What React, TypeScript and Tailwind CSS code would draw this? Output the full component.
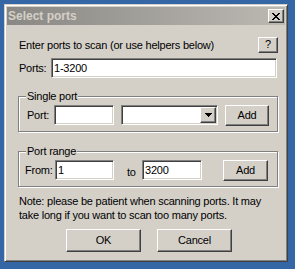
import React from "react";

const sunken =
  "border border-t-[#808080] border-l-[#808080] border-b-white border-r-white shadow-[inset_1px_1px_0_#404040,inset_-1px_-1px_0_#d4d0c8] bg-white";
const raised =
  "border border-t-white border-l-white border-b-[#404040] border-r-[#404040] shadow-[inset_-1px_-1px_0_#808080] bg-[#d4d0c8]";
const group =
  "relative border border-[#808080] shadow-[inset_1px_1px_0_#ffffff,1px_1px_0_#ffffff]";

function CloseGlyph() {
  const px: [number, number, number][] = [
    [0, 0, 2], [6, 0, 2],
    [1, 1, 2], [5, 1, 2],
    [2, 2, 4],
    [3, 3, 2],
    [2, 4, 4],
    [1, 5, 2], [5, 5, 2],
    [0, 6, 2], [6, 6, 2],
  ];
  return (
    <svg width="8" height="7" viewBox="0 0 8 7" shapeRendering="crispEdges">
      {px.map(([x, y, w], i) => (
        <rect key={i} x={x} y={y} width={w} height={1} fill="#000" />
      ))}
    </svg>
  );
}

function ArrowGlyph() {
  return (
    <svg width="7" height="4" viewBox="0 0 7 4" shapeRendering="crispEdges">
      <rect x="0" y="0" width="7" height="1" fill="#000" />
      <rect x="1" y="1" width="5" height="1" fill="#000" />
      <rect x="2" y="2" width="3" height="1" fill="#000" />
      <rect x="3" y="3" width="1" height="1" fill="#000" />
    </svg>
  );
}

export default function App() {
  return (
    <div className="w-[295px] h-[269px] bg-[#3567a6] pt-[4px] pl-[4px] font-['Liberation_Sans',Arial,sans-serif] text-[11px] tracking-[-0.22px] text-black">
      <div className="w-[284px] h-[258px] bg-[#d4d0c8] border border-t-[#d4d0c8] border-l-[#d4d0c8] border-b-[#404040] border-r-[#404040] shadow-[inset_1px_1px_0_#ffffff,inset_-1px_-1px_0_#808080] p-[2px] flex flex-col">
        {/* Title bar */}
        <div className="h-[18px] flex items-center bg-gradient-to-r from-[#8a8884] to-[#bcb9b3] pl-[1px] pr-[1px]">
          <span className="text-[12px] font-bold tracking-normal text-[#d4d0c8] leading-[18px]">
            Select ports
          </span>
          <div className={`ml-auto w-[16px] h-[14px] flex items-center justify-center ${raised}`}>
            <CloseGlyph />
          </div>
        </div>

        {/* Body */}
        <div className="pl-[11px] pr-[7px] pt-[12px] flex flex-col">
          <div className="flex items-center h-[15px]">
            <span className="pl-[1px] leading-[14px] whitespace-nowrap">
              Enter ports to scan (or use helpers below)
            </span>
            <div className={`ml-auto w-[20px] h-[16px] flex items-center justify-center leading-none ${raised}`}>
              ?
            </div>
          </div>

          <div className="mt-[6px] flex items-center h-[20px]">
            <span className="w-[33px] pl-[1px] leading-[14px]">Ports:</span>
            <input
              className={`w-[226px] h-[20px] px-[2px] text-[11px] outline-none ${sunken}`}
              defaultValue="1-3200"
            />
          </div>

          {/* Single port */}
          <div className={`${group} mt-[18px] pt-[8px] pb-[6px] pl-[8px]`}>
            <span className="absolute left-[7px] top-[-8px] bg-[#d4d0c8] px-[1px] leading-[14px] whitespace-nowrap">
              Single port
            </span>
            <div className="flex items-center h-[20px]">
              <span className="w-[27px] leading-[14px]">Port:</span>
              <input className={`w-[60px] h-[20px] px-[2px] text-[11px] outline-none ${sunken}`} defaultValue="" />
              <div className={`ml-[7px] w-[97px] h-[20px] p-[1px] flex ${sunken}`}>
                <div className="flex-1" />
                <div className={`w-[16px] h-[16px] flex items-center justify-center ${raised}`}>
                  <ArrowGlyph />
                </div>
              </div>
              <div className={`ml-[7px] w-[44px] h-[21px] flex items-center justify-center leading-none ${raised}`}>
                Add
              </div>
            </div>
          </div>

          {/* Port range */}
          <div className={`${group} mt-[19px] pt-[8px] pb-[6px] pl-[6px]`}>
            <span className="absolute left-[7px] top-[-8px] bg-[#d4d0c8] px-[1px] leading-[14px] whitespace-nowrap">
              Port range
            </span>
            <div className="flex items-center h-[20px]">
              <span className="w-[30px] leading-[14px]">From:</span>
              <input className={`w-[59px] h-[20px] px-[2px] text-[11px] outline-none ${sunken}`} defaultValue="1" />
              <span className="ml-[13px] w-[15px] leading-[14px] pt-[3px]">to</span>
              <input className={`w-[60px] h-[20px] px-[2px] text-[11px] outline-none ${sunken}`} defaultValue="3200" />
              <div className={`ml-[21px] w-[45px] h-[21px] flex items-center justify-center leading-none ${raised}`}>
                Add
              </div>
            </div>
          </div>

          <p className="mt-[7px] pl-[1px] leading-[14px] whitespace-nowrap">
            Note: please be patient when scanning ports. It may
            <br />
            take long if you want to scan too many ports.
          </p>

          <div className="mt-[7px] flex pl-[48px] gap-[16px]">
            <div className={`w-[75px] h-[23px] flex items-center justify-center leading-none ${raised}`}>OK</div>
            <div className={`w-[75px] h-[23px] flex items-center justify-center leading-none ${raised}`}>Cancel</div>
          </div>
        </div>
      </div>
    </div>
  );
}
